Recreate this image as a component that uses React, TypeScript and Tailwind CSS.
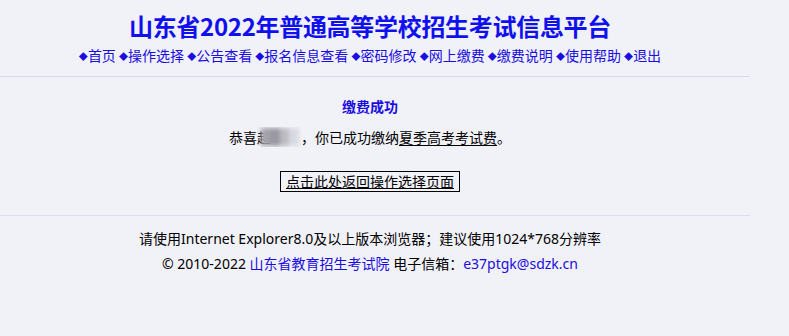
import React from "react";

const navItems = ["首页", "操作选择", "公告查看", "报名信息查看", "密码修改", "网上缴费", "缴费说明", "使用帮助", "退出"];

export default function App() {
  return (
    <div
      className="min-h-screen w-full bg-[#f1f1f8] text-black"
      style={{ fontFamily: '"Noto Sans CJK SC", "Noto Sans", sans-serif' }}
    >
      <div className="w-[750px]">
        {/* header */}
        <div className="h-[77px] border-b border-[#d6d6ff] pr-[10px] pt-[12px] text-center">
          <div className="text-[24px] font-bold leading-[28px] tracking-[-0.3px] text-[#1010ee]">
            山东省2022年普通高等学校招生考试信息平台
          </div>
          <div className="mt-[5px] text-[14px] leading-[20px] text-[#1a0ddf]">
            {navItems.map((n, i) => (
              <React.Fragment key={n}>
                {i > 0 && " "}
                <span className="text-[9px] align-[1px] text-[#1a0ddf]">◆</span>
                <span>{n}</span>
              </React.Fragment>
            ))}
          </div>
        </div>

        {/* content */}
        <div className="h-[139px] border-b border-[#dcdcf6] pr-[10px] pt-[19px] text-center text-[14px] leading-[20px]">
          <div className="font-bold text-[#1a0ddf]">缴费成功</div>
          <div className="mt-[11px] flex items-center justify-center">
            <span>恭喜</span>
            <span className="relative inline-block h-[20px] w-[44px] overflow-hidden">
              <span className="absolute left-0 top-0 text-black">赵</span>
              <span className="absolute left-[4px] top-[1px] flex h-[18px] w-[38px] blur-[2px]">
                <span className="h-full w-[9px] bg-[#a4a3aa]" />
                <span className="h-full w-[10px] bg-[#9a99a3]" />
                <span className="h-full w-[9px] bg-[#bdbcc2]" />
                <span className="h-full w-[10px] bg-[#d9d9e2]" />
              </span>
            </span>
            <span>，你已成功缴纳</span>
            <span className="underline underline-offset-2">夏季高考考试费</span>
            <span>。</span>
          </div>
          <div className="mt-[24px] flex justify-center">
            <span className="inline-block h-[21px] border border-black px-[5px] text-[14px] leading-[18px] underline underline-offset-1">
              点击此处返回操作选择页面
            </span>
          </div>
        </div>

        {/* footer */}
        <div
          className="pr-[10px] pt-[13px] text-center text-[14px] leading-[20px]"
          style={{ fontFamily: '"Noto Sans", "Noto Sans CJK SC", sans-serif' }}
        >
          <div>请使用Internet Explorer8.0及以上版本浏览器；建议使用1024*768分辨率</div>
          <div className="mt-[5px]">
            © 2010-2022 <span className="text-[#1a0ddf]">山东省教育招生考试院</span> 电子信箱：
            <span className="text-[#1a0ddf]">e37ptgk@sdzk.cn</span>
          </div>
        </div>
      </div>
    </div>
  );
}
